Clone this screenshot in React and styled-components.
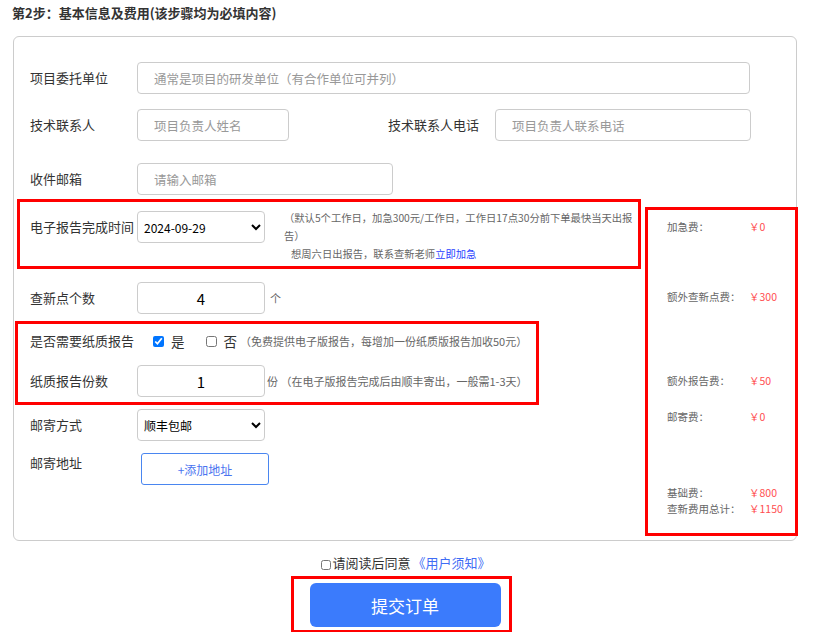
import React from 'react';
import styled, { createGlobalStyle } from 'styled-components';

const GlobalStyle = createGlobalStyle`
  body {
    margin: 0;
    background: #fff;
    font-family: "Noto Sans CJK SC", "Liberation Sans", sans-serif;
    color: #333;
  }
  * { box-sizing: border-box; }
`;

const Page = styled.div`
  width: 822px;
  padding: 0 25px 0 13px;
`;

const Title = styled.div`
  margin-left: -1px;
  font-size: 13px;
  font-weight: bold;
  line-height: 25px;
  color: #333;
`;

const Card = styled.div`
  display: flow-root;
  margin-top: 11px;
  border: 1px solid #ccc;
  border-radius: 6px;
`;

const FormCol = styled.div`
  padding-top: 25px;
`;

const Row = styled.div`
  display: flex;
  align-items: ${(p) => (p.$top ? 'flex-start' : 'center')};
  height: 32px;
  margin-top: ${(p) => p.$mt || 0}px;
  padding-left: ${(p) => (p.$pl === undefined ? 16 : p.$pl)}px;
`;

const Label = styled.div`
  width: 107px;
  flex-shrink: 0;
  margin-left: ${(p) => p.$ml || 0}px;
  margin-top: ${(p) => p.$mt || 0}px;
  font-size: 13px;
  line-height: 20px;
  color: #333;
  white-space: nowrap;
`;

const TextInput = styled.input`
  width: ${(p) => p.$w}px;
  flex-shrink: 0;
  height: 32px;
  border: 1px solid #ccc;
  border-radius: 4px;
  padding: 0 0 0 16px;
  font-family: inherit;
  font-size: 12.5px;
  color: #333;
  outline: none;
  &::placeholder {
    color: #999;
  }
`;

const NumInput = styled(TextInput)`
  padding: 0;
  text-align: center;
  font-size: 15px;
  color: #000;
`;

const Select = styled.select`
  width: 128px;
  flex-shrink: 0;
  height: 32px;
  border: 1px solid #ccc;
  border-radius: 4px;
  background: #fff;
  padding: 0 2px;
  font-family: inherit;
  font-size: 12px;
  color: #000;
  margin-top: ${(p) => p.$mt || 0}px;
`;

const Highlight = styled.div`
  border: 3px solid #ff0000;
  margin-left: ${(p) => p.$ml || 0}px;
  margin-top: ${(p) => p.$mt || 0}px;
  width: ${(p) => p.$w}px;
  padding: ${(p) => p.$pad};
`;

const TimeRow = styled.div`
  display: flex;
  align-items: flex-start;
`;

const NoteCol = styled.div`
  margin-left: 19px;
  width: 354px;
  flex-shrink: 0;
  font-size: 10.3px;
  line-height: 18px;
  color: #666;
`;

const NoteIndent = styled.div`
  padding-left: 7px;
`;

const Link = styled.span`
  color: #2a3fff;
  cursor: pointer;
`;

const Note = styled.span`
  font-size: 11px;
  color: #666;
  white-space: nowrap;
  margin-left: ${(p) => p.$ml || 0}px;
`;

const Check = styled.input.attrs({ type: 'checkbox' })`
  width: 11px;
  height: 11px;
  flex-shrink: 0;
  margin: 0 0 0 ${(p) => p.$ml || 0}px;
`;

const CheckText = styled.span`
  font-size: 13.5px;
  color: #333;
  margin-left: 7px;
`;

const AddButton = styled.button`
  margin-left: 4px;
  width: 128px;
  height: 32px;
  background: #fff;
  border: 1px solid #4a86f0;
  border-radius: 3px;
  color: #4a74f0;
  font-family: inherit;
  font-size: 12px;
  cursor: pointer;
`;

const FeePanel = styled.div`
  float: right;
  width: 153px;
  height: 329px;
  margin: 170px -2px 4px 0;
  border: 3px solid #ff0000;
  padding: 9px 0 0 19px;
`;

const FeeRow = styled.div`
  display: flex;
  margin-top: ${(p) => p.$mt || 0}px;
  font-size: 10.5px;
  line-height: 16px;
`;

const FeeLabel = styled.span`
  width: 82px;
  color: #666;
  white-space: nowrap;
`;

const FeeValue = styled.span`
  color: #ff4d4f;
`;

const Bottom = styled.div`
  display: flex;
  flex-direction: column;
  align-items: center;
  padding-right: 8px;
`;

const Agreement = styled.label`
  margin-top: 12px;
  margin-left: 10px;
  display: flex;
  align-items: center;
  font-size: 13px;
  line-height: 20px;
  color: #333;
`;

const AgreeCheck = styled.input.attrs({ type: 'checkbox' })`
  width: 10px;
  height: 10px;
  margin: 3px 1px 0 0;
`;

const AgreeLink = styled.span`
  margin-left: 2px;
  color: #3f6df5;
`;

const SubmitBox = styled.div`
  margin-top: 3px;
  border: 3px solid #ff0000;
  padding: 4px 8px 3px 16px;
`;

const SubmitButton = styled.button`
  width: 191px;
  height: 44px;
  border: none;
  border-radius: 6px;
  background: #3b7bfc;
  color: #fff;
  font-family: inherit;
  font-size: 17px;
  cursor: pointer;
`;

const fees = [
  { label: '加急费：', value: '￥0', mt: 0 },
  { label: '额外查新点费：', value: '￥300', mt: 54 },
  { label: '额外报告费：', value: '￥50', mt: 68 },
  { label: '邮寄费：', value: '￥0', mt: 20 },
  { label: '基础费：', value: '￥800', mt: 60 },
  { label: '查新费用总计：', value: '￥1150', mt: 0 },
];

export default function App() {
  return (
    <Page>
      <GlobalStyle />
      <Title>第2步：基本信息及费用(该步骤均为必填内容)</Title>
      <Card>
        <FeePanel>
          {fees.map((f) => (
            <FeeRow key={f.label} $mt={f.mt}>
              <FeeLabel>{f.label}</FeeLabel>
              <FeeValue>{f.value}</FeeValue>
            </FeeRow>
          ))}
        </FeePanel>

        <FormCol>
          <Row>
            <Label>项目委托单位</Label>
            <TextInput $w={613} placeholder="通常是项目的研发单位（有合作单位可并列）" />
          </Row>
          <Row $mt={15}>
            <Label>技术联系人</Label>
            <TextInput $w={152} placeholder="项目负责人姓名" />
            <Label $ml={99}>技术联系人电话</Label>
            <TextInput $w={256} placeholder="项目负责人联系电话" />
          </Row>
          <Row $mt={22}>
            <Label>收件邮箱</Label>
            <TextInput $w={256} placeholder="请输入邮箱" />
          </Row>

          <Highlight $ml={3} $mt={4} $w={624} $pad="7px 0 3px 10px">
            <TimeRow>
              <Label $mt={8}>电子报告完成时间</Label>
              <Select $mt={2} defaultValue="2024-09-29">
                <option>2024-09-29</option>
              </Select>
              <NoteCol>
                <div>（默认5个工作日，加急300元/工作日，工作日17点30分前下单最快当天出报告）</div>
                <NoteIndent>
                  想周六日出报告，联系查新老师<Link>立即加急</Link>
                </NoteIndent>
              </NoteCol>
            </TimeRow>
          </Highlight>

          <Row $mt={13}>
            <Label>查新点个数</Label>
            <NumInput $w={128} defaultValue="4" />
            <Note $ml={5}>个</Note>
          </Row>

          <Highlight $ml={1} $mt={7} $w={524} $pad="1px 0 5px 12px">
            <Row $pl={0}>
              <Label>是否需要纸质报告</Label>
              <Check $ml={16} defaultChecked />
              <CheckText>是</CheckText>
              <Check $ml={21} />
              <CheckText>否</CheckText>
              <Note $ml={3}>（免费提供电子版报告，每增加一份纸质版报告加收50元）</Note>
            </Row>
            <Row $pl={0} $mt={8}>
              <Label>纸质报告份数</Label>
              <NumInput $w={128} defaultValue="1" />
              <Note $ml={2}>份 （在电子版报告完成后由顺丰寄出，一般需1-3天）</Note>
            </Row>
          </Highlight>

          <Row $mt={4}>
            <Label>邮寄方式</Label>
            <Select defaultValue="顺丰包邮">
              <option>顺丰包邮</option>
            </Select>
          </Row>
          <Row $mt={12} $top>
            <Label>邮寄地址</Label>
            <AddButton>+添加地址</AddButton>
          </Row>
        </FormCol>
      </Card>

      <Bottom>
        <Agreement>
          <AgreeCheck />
          请阅读后同意<AgreeLink>《用户须知》</AgreeLink>
        </Agreement>
        <SubmitBox>
          <SubmitButton>提交订单</SubmitButton>
        </SubmitBox>
      </Bottom>
    </Page>
  );
}
